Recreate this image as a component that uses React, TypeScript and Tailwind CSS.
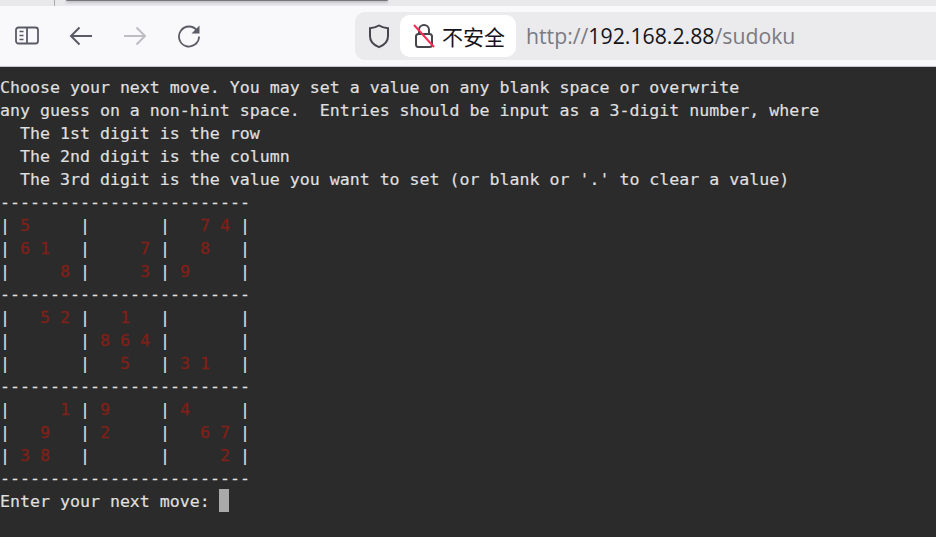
const board = [
  "-------------------------",
  "| 5     |       |   7 4 |",
  "| 6 1   |     7 |   8   |",
  "|     8 |     3 | 9     |",
  "-------------------------",
  "|   5 2 |   1   |       |",
  "|       | 8 6 4 |       |",
  "|       |   5   | 3 1   |",
  "-------------------------",
  "|     1 | 9     | 4     |",
  "|   9   | 2     |   6 7 |",
  "| 3 8   |       |     2 |",
  "-------------------------",
];

const intro = [
  "Choose your next move. You may set a value on any blank space or overwrite",
  "any guess on a non-hint space.  Entries should be input as a 3-digit number, where",
  "  The 1st digit is the row",
  "  The 2nd digit is the column",
  "  The 3rd digit is the value you want to set (or blank or '.' to clear a value)",
];

function BoardLine({ line }: { line: string }) {
  return (
    <div className="h-[23px] whitespace-pre">
      {line.split("").map((ch, i) =>
        /\d/.test(ch) ? (
          <span key={i} className="text-[#7f2018] [-webkit-text-stroke:0.4px_#7f2018]">
            {ch}
          </span>
        ) : (
          <span key={i}>{ch}</span>
        )
      )}
    </div>
  );
}

export default function App() {
  return (
    <div className="flex h-[537px] w-[936px] flex-col overflow-hidden bg-[#2b2b2b]">
      {/* tab strip */}
      <div className="h-[6px] shrink-0 bg-[#e9e9ec] pl-[54px]">
        <div className="flex h-[2px] w-[336px]">
          <div className="h-[6px] w-px bg-[#a9a9ad]" />
          <div className="ml-[11px] h-[1px] w-[322px] rounded-b bg-[#77777b] shadow-[0_1px_3px_#77777b]" />
        </div>
      </div>

      {/* toolbar */}
      <div className="flex h-[61px] shrink-0 items-center border-b border-[#c8c8cc] bg-[#f9f9fb]">
        <div className="ml-[15px] flex items-center text-[#5b5b66]">
          <svg width="24" height="20" viewBox="0 0 24 20" fill="none" stroke="currentColor" strokeWidth="1.8">
            <rect x="1" y="1.5" width="22" height="16" rx="2.5" />
            <path d="M12 1.5v16" />
            <path d="M4.5 5.5h4M4.5 9.5h4M4.5 13.5h4" strokeWidth="1.6" />
          </svg>
          <svg className="ml-[30px]" width="24" height="22" viewBox="0 0 24 22" fill="none" stroke="currentColor" strokeWidth="2">
            <path d="M23 11H2M10.5 2.5 2 11l8.5 8.5" />
          </svg>
          <svg className="ml-[30px] text-[#bdbdc2]" width="24" height="22" viewBox="0 0 24 22" fill="none" stroke="currentColor" strokeWidth="2">
            <path d="M1 11h21M13.5 2.5 22 11l-8.5 8.5" />
          </svg>
          <svg className="ml-[30px]" width="24" height="24" viewBox="0 0 24 24" fill="none" stroke="currentColor" strokeWidth="1.8">
            <path d="M20 6.5A10 10 0 1 0 22 12.5" />
            <path d="M22.5 1.5v8h-8z" fill="currentColor" stroke="none" />
          </svg>
        </div>

        <div className="ml-[154px] flex h-[48px] flex-1 items-center rounded-l-[10px] bg-[#ebebee]">
          <svg className="ml-[13px]" width="22" height="25" viewBox="0 0 22 25" fill="none" stroke="#45454c" strokeWidth="2">
            <path d="M11 1.5c3 1.8 6 2.6 9 2.8v8c0 5-3.6 8.8-9 10.8-5.400-2-9-5.800-9-10.800v-8c3-.2 6-1 9-2.800z" />
          </svg>
          <div className="ml-[10px] flex h-[42px] w-[116px] items-center rounded-[10px] bg-white pl-[13px]">
            <svg width="22" height="26" viewBox="0 0 22 26" fill="none">
              <path d="M6 11V7a5 5 0 0 1 10 0v4" stroke="#45454c" strokeWidth="2" />
              <rect x="3" y="11" width="16" height="13" rx="2.500" stroke="#45454c" strokeWidth="2" />
              <path d="M1 2l20 22" stroke="#ff2d55" strokeWidth="2" />
            </svg>
            <span className="ml-[7px] font-['Noto_Sans_CJK_SC',sans-serif] text-[21px] leading-none text-[#15141a]">不安全</span>
          </div>
          <div className="ml-[10px] font-['Open_Sans',sans-serif] text-[21.25px] leading-none text-[#7a7a80]">
            http://<span className="text-[#15141a]">192.168.2.88</span>/sudoku
          </div>
        </div>
      </div>

      {/* terminal output */}
      <main className="flex-1 pt-[9px] font-['DejaVu_Sans_Mono',monospace] text-[16.6px] leading-[23px] text-[#e0e0e0] [-webkit-text-stroke:0.15px_#e0e0e0]">
        {intro.map((line) => (
          <div key={line} className="h-[23px] whitespace-pre">
            {line}
          </div>
        ))}
        {board.map((line, i) => (
          <BoardLine key={i} line={line} />
        ))}
        <div className="flex h-[23px] items-center whitespace-pre">
          Enter your next move: <span className="-ml-px -mt-[2px] h-[23px] w-[10px] bg-[#a9a9a9]" />
        </div>
      </main>
    </div>
  );
}
